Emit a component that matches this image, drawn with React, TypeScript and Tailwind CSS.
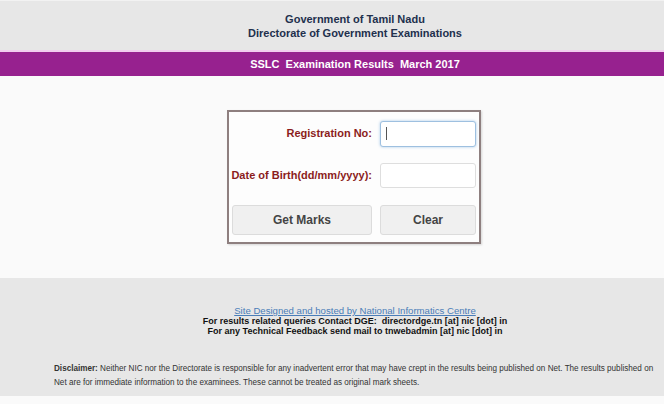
import React from 'react';

const App: React.FC = () => {
  return (
    <div className="w-[664px] h-[404px] overflow-hidden bg-[#fafafa] font-['Liberation_Sans',Arial,sans-serif]">
      {/* header */}
      <div className="h-[50px] bg-[#e7e7e7] border-t border-[#f2f2f2] pl-[46px] flex flex-col items-center justify-center text-[11px] font-bold leading-[14px] text-[#22304d]">
        <span>Government of Tamil Nadu</span>
        <span>Directorate of Government Examinations</span>
      </div>
      <div className="h-[2px] bg-[#f1cdee]"></div>
      <div className="h-[24px] bg-[#97218f] pl-[46px] flex items-center justify-center text-white text-[11px] font-bold whitespace-pre">
        SSLC  Examination Results  March 2017
      </div>

      {/* form */}
      <div className="h-[202px] pl-[44px] flex justify-center pt-[34px]">
        <div className="w-[254px] h-[134px] border-2 border-[#8e7f7f] shadow-[1px_1px_2px_rgba(0,0,0,0.15)] bg-[#fdfdfd] px-[3px] pt-[8px]">
          <div className="flex items-center h-[27px]">
            <label className="w-[148px] shrink-0 text-right pr-[8px] text-[11px] font-bold text-[#8b1c1c] whitespace-nowrap">Registration No:</label>
            <div className="w-[96px] h-[26px] rounded-[3px] border border-[#9ec0e0] bg-white shadow-[0_0_3px_#a8c8e8] flex items-center pl-[5px]">
              <div className="w-px h-[13px] bg-[#555]"></div>
            </div>
          </div>
          <div className="flex items-center h-[25px] mt-[16px]">
            <label className="w-[148px] shrink-0 flex justify-end pr-[8px] text-[11px] font-bold text-[#8b1c1c] whitespace-nowrap">Date of Birth(dd/mm/yyyy):</label>
            <div className="w-[96px] h-[25px] rounded-[3px] border border-[#dedede] bg-white"></div>
          </div>
          <div className="flex gap-[8px] mt-[17px]">
            <button className="w-[140px] h-[30px] rounded-[3px] border border-[#dcdcdc] bg-[#f0f0f0] text-[12px] font-bold text-[#444]">Get Marks</button>
            <button className="w-[96px] h-[30px] rounded-[3px] border border-[#dcdcdc] bg-[#f0f0f0] text-[12px] font-bold text-[#444]">Clear</button>
          </div>
        </div>
      </div>

      {/* footer */}
      <div className="h-[118px] bg-[#e7e7e7] pl-[46px] flex flex-col items-center">
        <div className="mt-[28px] flex flex-col items-center text-[9px] leading-[10px] font-bold text-[#111]">
          <a className="underline font-normal text-[9.6px] text-[#4a7db8]">Site Designed and hosted by National Informatics Centre</a>
          <span className="whitespace-pre">For results related queries Contact DGE:  directordge.tn [at] nic [dot] in</span>
          <span>For any Technical Feedback send mail to tnwebadmin [at] nic [dot] in</span>
        </div>
        <p className="mt-[26px] w-[602px] text-[8.15px] leading-[14px] text-[#333]">
          <b>Disclaimer:</b> Neither NIC nor the Directorate is responsible for any inadvertent error that may have crept in the results being published on Net. The results published on Net are for immediate information to the examinees. These cannot be treated as original mark sheets.
        </p>
      </div>
    </div>
  );
};

export default App;
